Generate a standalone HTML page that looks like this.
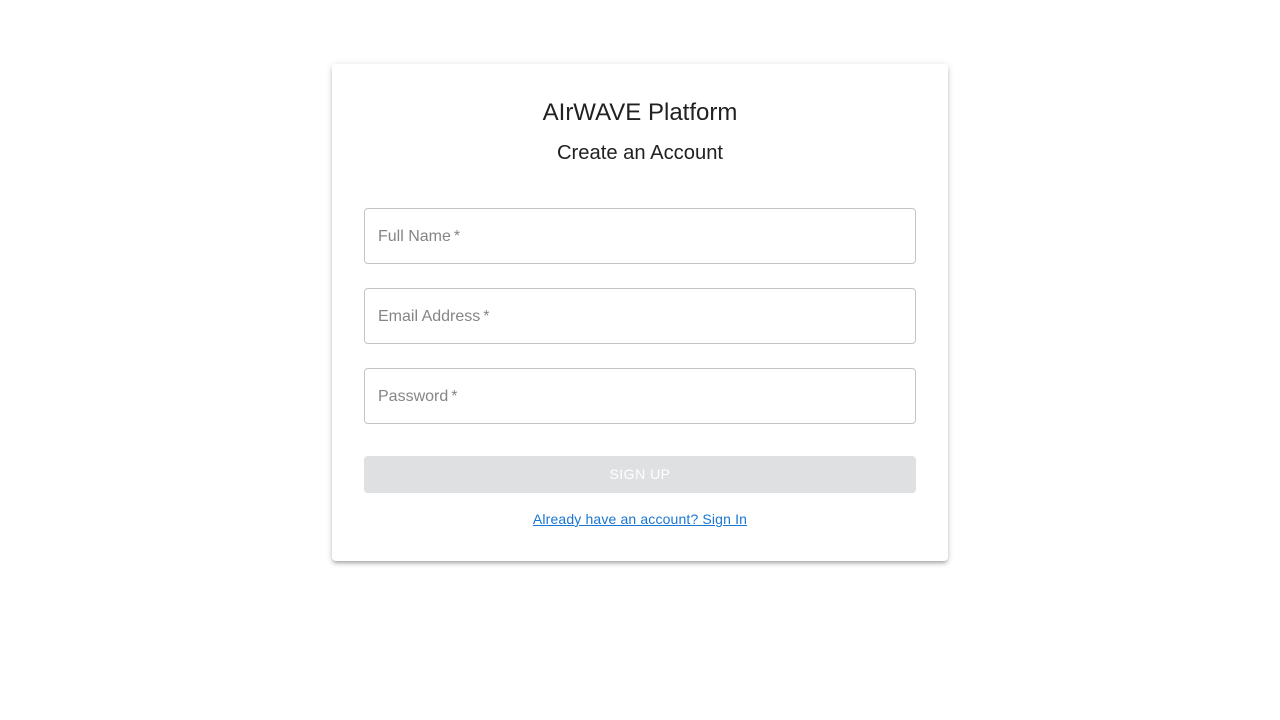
<!DOCTYPE html>
<html><head><meta charset="utf-8"><style>
body{margin:0;background:#fff;font-family:"Liberation Sans",Arial,sans-serif;}
.card{position:absolute;left:332px;top:64px;width:616px;height:497px;background:#fff;border-radius:4px;box-shadow:0 3px 3px -2px rgba(0,0,0,.2),0 3px 4px 0 rgba(0,0,0,.14),0 1px 8px 0 rgba(0,0,0,.12);}
h1{position:absolute;top:98px;left:0;width:1280px;text-align:center;margin:0;font-weight:400;font-size:24px;color:#212121;line-height:30px;}
h2{position:absolute;top:141px;left:0;width:1280px;text-align:center;margin:0;font-weight:400;font-size:20.2px;color:#212121;line-height:25px;}
.f{position:absolute;left:364px;width:550px;height:54px;border:1px solid #c4c4c4;border-radius:4px;}
.f span{position:absolute;left:13px;top:18px;font-size:16px;color:#858585;line-height:20px;}
.f span b{font-weight:400;margin-left:3px;}
.btn{position:absolute;left:364px;top:456px;width:552px;height:37px;background:#dfe0e2;border-radius:4px;color:#fff;font-size:14px;letter-spacing:.5px;text-align:center;line-height:37px;}
a{position:absolute;top:510px;left:0;width:1280px;text-align:center;color:#1976d2;font-size:14px;line-height:18px;letter-spacing:.15px;text-decoration:underline;}
</style></head><body>
<div class="card"></div>
<h1>AIrWAVE Platform</h1>
<h2>Create an Account</h2>
<div class="f" style="top:208px"><span>Full Name<b>*</b></span></div>
<div class="f" style="top:288px"><span>Email Address<b>*</b></span></div>
<div class="f" style="top:368px"><span>Password<b>*</b></span></div>
<div class="btn">SIGN UP</div>
<a>Already have an account? Sign In</a>
</body></html>
